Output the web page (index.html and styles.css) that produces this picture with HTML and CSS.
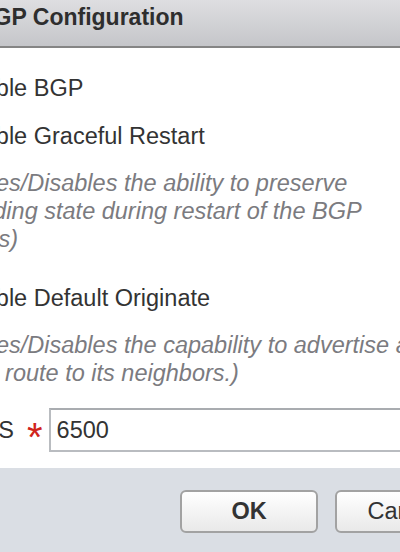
FILE: index.html
```html
<!DOCTYPE html>
<html>
<head>
<meta charset="utf-8">
<link rel="stylesheet" href="styles.css">
</head>
<body>
<div class="dialog">
  <div class="header"><h1 class="title">BGP Configuration</h1></div>
  <div class="content">
    <div class="field first">
      <label class="check"><span class="box"></span><span class="label-text">Enable BGP</span></label>
    </div>
    <div class="field">
      <label class="check"><span class="box"></span><span class="label-text">Enable Graceful Restart</span></label>
      <p class="desc">(Enables/Disables the ability to preserve forwarding state during restart of the BGP process)</p>
    </div>
    <div class="field">
      <label class="check"><span class="box"></span><span class="label-text">Enable Default Originate</span></label>
      <p class="desc">(Enables/Disables the capability to advertise a default route to its neighbors.)</p>
    </div>
    <div class="as-row">
      <span class="as-label"><span>Local AS</span></span>
      <span class="req">*</span>
      <input class="as-input" type="text" value="6500">
    </div>
  </div>
  <div class="footer">
    <button class="btn btn-ok">OK</button>
    <button class="btn">Cancel</button>
  </div>
</div>
</body>
</html>
```
FILE: styles.css
```css
html, body {
  margin: 0;
  padding: 0;
  background: #ffffff;
  overflow: hidden;
}
body {
  font-family: "Liberation Sans", Arial, sans-serif;
  color: #333333;
  width: 400px;
  height: 552px;
}
.dialog {
  margin-left: -72px;
  width: 584px;
  display: flex;
  flex-direction: column;
}
.header {
  height: 46px;
  border-bottom: 2px solid #858585;
  background: linear-gradient(#dedee1, #c5c6ca);
  display: flex;
  align-items: center;
  padding-left: 49px;
}
.title {
  margin: 0;
  font-size: 23px;
  font-weight: bold;
  color: #2e2e2e;
  line-height: 28px;
  padding-bottom: 12px;
  white-space: nowrap;
}
.content {
  background: #ffffff;
  padding: 26px 0 16px 0;
  width: 503px;
  display: flex;
  flex-direction: column;
}
.field {
  margin-top: 20px;
}
.field.first {
  margin-top: 0;
}
.check {
  display: flex;
  align-items: center;
  font-size: 23.5px;
  line-height: 28px;
  height: 28px;
  white-space: nowrap;
}
.box {
  width: 17px;
  height: 17px;
  margin-right: 9px;
  border: 1px solid #999;
  box-sizing: border-box;
  flex: none;
}
.desc {
  margin: 19px 0 11px 0;
  font-size: 23.5px;
  line-height: 28px;
  font-style: italic;
  color: #7b7b80;
}
.as-row {
  margin-top: 10px;
  display: flex;
  align-items: flex-start;
  height: 44px;
}
.as-label {
  display: flex;
  justify-content: flex-end;
  width: 86px;
  font-size: 23.5px;
  line-height: 28px;
  margin-top: 8px;
  white-space: nowrap;
  flex: none;
}
.req {
  color: #d0241b;
  font-size: 40px;
  line-height: 40px;
  height: 40px;
  margin-top: 9px;
  margin-left: 13px;
  margin-right: 6px;
  flex: none;
}
.as-input {
  flex: none;
  width: 420px;
  height: 44px;
  box-sizing: border-box;
  border: 2px solid #b9bcc0;
  border-top-color: #a9acb0;
  padding: 0 6px;
  font-family: "Liberation Sans", Arial, sans-serif;
  font-size: 23.5px;
  color: #333333;
  margin: 0;
  outline: none;
}
.footer {
  background: #dadee4;
  height: 84px;
  padding: 22px 0 0 252px;
  display: flex;
  gap: 17px;
  box-sizing: border-box;
}
.btn {
  width: 138px;
  height: 43px;
  border: 2px solid #a2a2a2;
  border-radius: 6px;
  background: linear-gradient(#ffffff, #e9e9e9);
  font-family: "Liberation Sans", Arial, sans-serif;
  font-size: 23.5px;
  color: #333333;
  padding: 0;
  flex: none;
}
.btn-ok {
  font-weight: bold;
}
```
